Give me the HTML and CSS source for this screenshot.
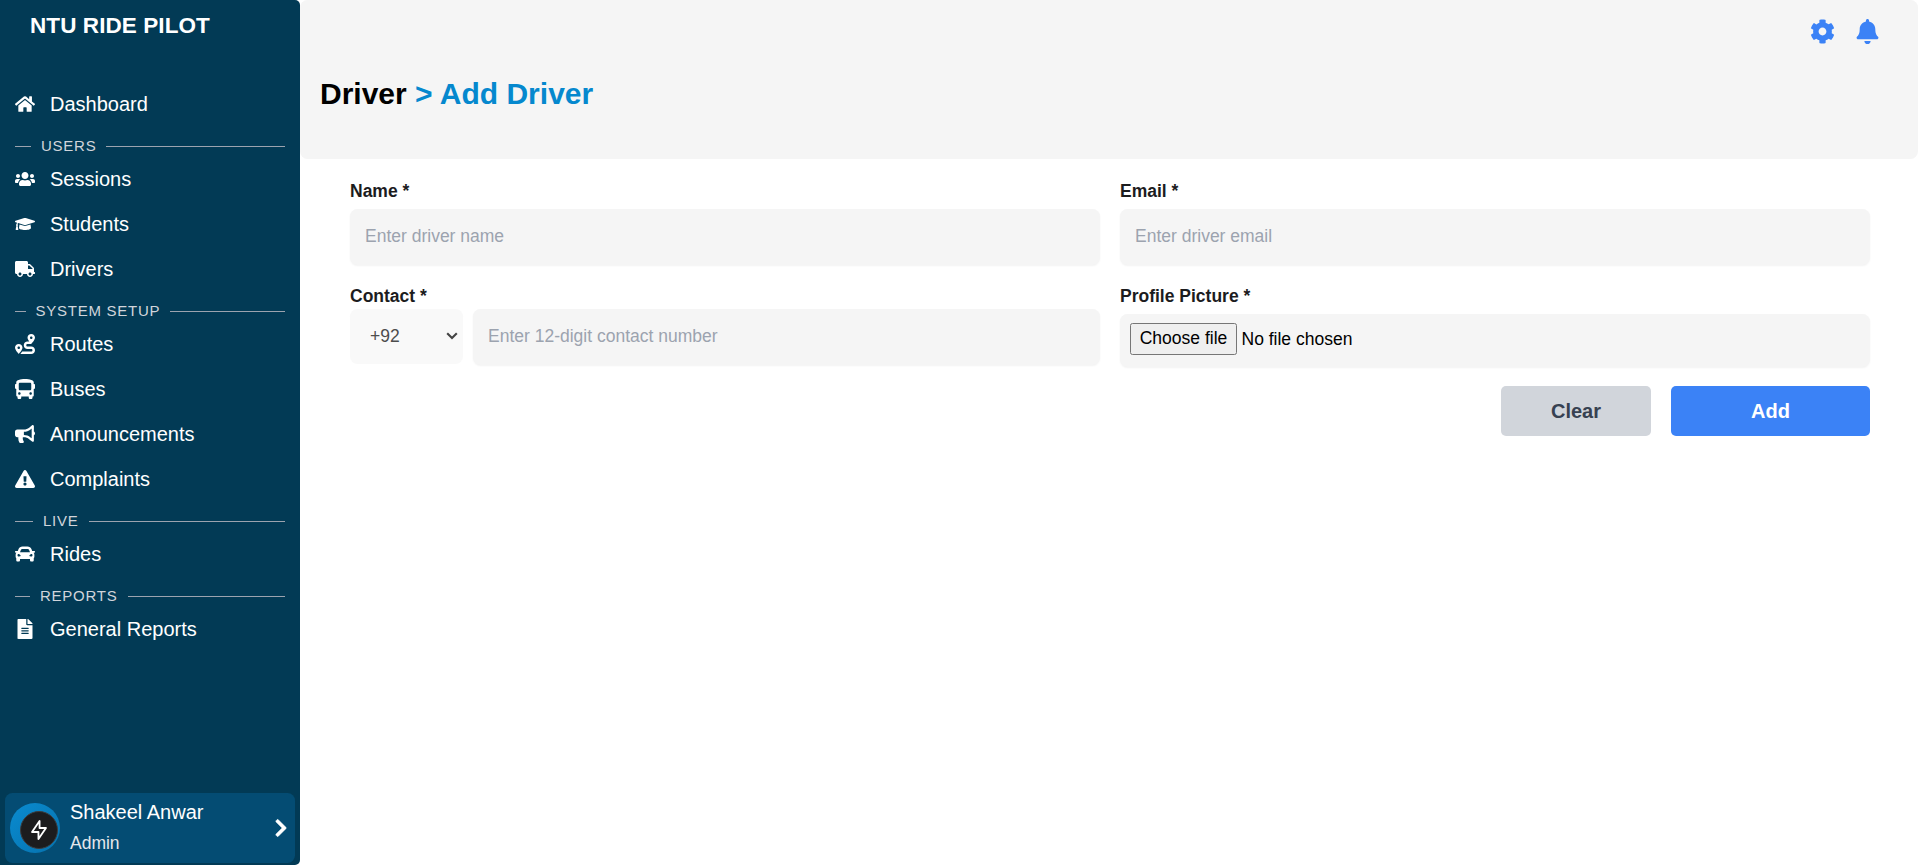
FILE: index.html
```html
<!DOCTYPE html>
<html lang="en">
<head>
<meta charset="utf-8">
<title>NTU Ride Pilot</title>
<link rel="stylesheet" href="styles.css">
</head>
<body>
<div class="app">
  <aside class="sidebar">
    <h1 class="brand">NTU RIDE PILOT</h1>
    <nav class="nav">
      <a class="nav-item"><svg class="icon" viewBox="0 0 576 512"><path d="M280.37 148.26L96 300.11V464a16 16 0 0 0 16 16l112.06-.29a16 16 0 0 0 15.92-16V368a16 16 0 0 1 16-16h64a16 16 0 0 1 16 16v95.64a16 16 0 0 0 16 16.05L464 480a16 16 0 0 0 16-16V300L295.67 148.26a12.19 12.19 0 0 0-15.3 0zM571.6 251.47L488 182.56V44.05a12 12 0 0 0-12-12h-56a12 12 0 0 0-12 12v72.61L318.47 43a48 48 0 0 0-61 0L4.34 251.47a12 12 0 0 0-1.6 16.9l25.5 31A12 12 0 0 0 45.15 301l235.22-193.74a12.19 12.19 0 0 1 15.3 0L530.9 301a12 12 0 0 0 16.9-1.6l25.5-31a12 12 0 0 0-1.7-16.93z"/></svg><span>Dashboard</span></a>
      <div class="section users"><span>USERS</span></div>
      <a class="nav-item"><svg class="icon" viewBox="0 0 640 512"><path d="M96 224c35.3 0 64-28.7 64-64s-28.7-64-64-64-64 28.7-64 64 28.7 64 64 64zm448 0c35.3 0 64-28.7 64-64s-28.7-64-64-64-64 28.7-64 64 28.7 64 64 64zm32 32h-64c-17.6 0-33.5 7.1-45.1 18.6 40.3 22.1 68.9 62 75.1 109.4h66c17.7 0 32-14.3 32-32v-32c0-35.3-28.7-64-64-64zm-256 0c61.9 0 112-50.1 112-112S381.9 32 320 32 208 82.1 208 144s50.1 112 112 112zm76.8 32h-8.3c-20.8 10-43.9 16-68.5 16s-47.6-6-68.5-16h-8.3C179.6 288 128 339.6 128 403.2V432c0 26.5 21.5 48 48 48h288c26.5 0 48-21.5 48-48v-28.8c0-63.6-51.6-115.2-115.2-115.2zm-223.7-13.4C161.5 263.1 145.6 256 128 256H64c-35.3 0-64 28.7-64 64v32c0 17.7 14.3 32 32 32h65.9c6.3-47.4 34.9-87.3 75.2-109.4z"/></svg><span>Sessions</span></a>
      <a class="nav-item"><svg class="icon" viewBox="0 0 640 512"><path d="M622.34 153.2L343.4 67.5c-15.2-4.67-31.6-4.67-46.79 0L17.66 153.2c-23.54 7.23-23.54 38.36 0 45.59l48.63 14.94c-10.67 13.19-17.23 29.28-17.88 46.9C38.78 266.15 32 276.11 32 288c0 10.78 5.68 19.85 13.86 25.65L20.33 428.53C18.11 438.52 25.71 448 35.94 448h56.11c10.24 0 17.84-9.48 15.62-19.47L82.14 313.65C90.32 307.85 96 298.78 96 288c0-11.57-6.47-21.25-15.66-26.87.76-15.02 8.44-28.3 20.69-36.72L296.6 284.5c9.06 2.78 26.44 6.25 46.79 0l278.95-85.7c23.55-7.24 23.55-38.36 0-45.6zM352.79 315.09c-28.53 8.76-52.84 3.92-65.59 0l-145.02-44.55L128 384c0 35.35 85.96 64 192 64s192-28.65 192-64l-14.18-113.47-145.03 44.56z"/></svg><span>Students</span></a>
      <a class="nav-item"><svg class="icon" viewBox="0 0 640 512"><path d="M624 352h-16V243.9c0-12.7-5.1-24.9-14.1-33.9L494 110.1c-9-9-21.2-14.1-33.9-14.1H416V48c0-26.5-21.5-48-48-48H48C21.5 0 0 21.5 0 48v320c0 26.5 21.5 48 48 48h16c0 53 43 96 96 96s96-43 96-96h128c0 53 43 96 96 96s96-43 96-96h48c8.8 0 16-7.2 16-16v-32c0-8.8-7.2-16-16-16zM160 464c-26.5 0-48-21.5-48-48s21.5-48 48-48 48 21.5 48 48-21.5 48-48 48zm320 0c-26.5 0-48-21.5-48-48s21.5-48 48-48 48 21.5 48 48-21.5 48-48 48zm80-208H416V144h44.1l99.9 99.9V256z"/></svg><span>Drivers</span></a>
      <div class="section system"><span>SYSTEM SETUP</span></div>
      <a class="nav-item"><svg class="icon" viewBox="0 0 512 512"><path d="M416 320h-96c-17.6 0-32-14.4-32-32s14.4-32 32-32h96s96-107 96-160-43-96-96-96-96 43-96 96c0 25.5 22.2 63.4 45.3 96H320c-52.9 0-96 43.1-96 96s43.1 96 96 96h96c17.6 0 32 14.4 32 32s-14.4 32-32 32H185.5c-16 24.8-33.8 47.7-47.3 64H416c52.9 0 96-43.1 96-96s-43.1-96-96-96zm0-256c17.7 0 32 14.3 32 32s-14.3 32-32 32-32-14.3-32-32 14.3-32 32-32zM96 256c-53 0-96 43-96 96s96 160 96 160 96-107 96-160-43-96-96-96zm0 128c-17.7 0-32-14.3-32-32s14.3-32 32-32 32 14.3 32 32-14.3 32-32 32z"/></svg><span>Routes</span></a>
      <a class="nav-item"><svg class="icon" viewBox="0 0 512 512"><path d="M488 128h-8V80c0-44.8-99.2-80-224-80S32 35.2 32 80v48h-8c-13.25 0-24 10.74-24 24v80c0 13.25 10.75 24 24 24h8v160c0 17.67 14.33 32 32 32v32c0 17.67 14.33 32 32 32h32c17.67 0 32-14.33 32-32v-32h192v32c0 17.67 14.33 32 32 32h32c17.67 0 32-14.33 32-32v-32h6.4c16 0 25.6-12.8 25.6-25.6V256h8c13.25 0 24-10.75 24-24v-80c0-13.26-10.75-24-24-24zM112 400c-17.67 0-32-14.33-32-32s14.33-32 32-32 32 14.33 32 32-14.33 32-32 32zm16-112c-17.67 0-32-14.33-32-32V128c0-17.67 14.33-32 32-32h256c17.67 0 32 14.33 32 32v128c0 17.67-14.33 32-32 32H128zm272 112c-17.67 0-32-14.33-32-32s14.33-32 32-32 32 14.33 32 32-14.33 32-32 32z"/></svg><span>Buses</span></a>
      <a class="nav-item"><svg class="icon" viewBox="0 0 576 512"><path d="M576 240c0-23.63-12.95-44.04-32-55.12V32.01C544 23.26 537.02 0 512 0c-7.12 0-14.19 2.38-19.98 7.02l-85.03 68.03C364.28 109.19 310.66 128 256 128H64c-35.35 0-64 28.65-64 64v96c0 35.35 28.65 64 64 64h33.7c-1.39 10.48-2.18 21.14-2.18 32 0 39.77 9.26 77.35 25.56 110.94 5.19 10.69 16.52 17.06 28.4 17.06h74.28c26.05 0 41.69-29.84 25.9-50.56-16.4-21.52-26.15-48.36-26.15-77.44 0-11.11 1.62-21.79 4.41-32H256c54.66 0 108.28 18.81 150.98 52.95l85.03 68.03a32.023 32.023 0 0 0 19.98 7.02c24.92 0 32-22.78 32-32V295.13C563.05 284.04 576 263.63 576 240zm-96 141.42l-33.05-26.44C392.95 311.78 325.12 288 256 288v-96c69.12 0 136.95-23.78 190.95-66.98L480 98.58v282.84z"/></svg><span>Announcements</span></a>
      <a class="nav-item"><svg class="icon" viewBox="0 0 576 512"><path d="M569.517 440.013C587.975 472.007 564.806 512 527.94 512H48.054c-36.937 0-59.999-40.055-41.577-71.987L246.423 23.985c18.467-32.009 64.72-31.951 83.154 0l239.94 416.028zM288 354c-25.405 0-46 20.595-46 46s20.595 46 46 46 46-20.595 46-46-20.595-46-46-46zm-43.673-165.346l7.418 136c.347 6.364 5.609 11.346 11.982 11.346h48.546c6.373 0 11.635-4.982 11.982-11.346l7.418-136c.375-6.874-5.098-12.654-11.982-12.654h-63.383c-6.884 0-12.356 5.78-11.981 12.654z"/></svg><span>Complaints</span></a>
      <div class="section live"><span>LIVE</span></div>
      <a class="nav-item"><svg class="icon" viewBox="0 0 512 512"><path d="M499.99 176h-59.87l-16.64-41.6C406.38 91.63 365.57 64 319.5 64h-127c-46.06 0-86.88 27.63-103.99 70.4L71.87 176H12.01C4.2 176-1.53 183.34.37 190.91l6 24C7.7 220.25 12.5 224 18.01 224h20.07C24.65 235.73 16 252.78 16 272v48c0 16.12 6.16 30.67 16 41.93V416c0 17.67 14.33 32 32 32h32c17.67 0 32-14.33 32-32v-32h256v32c0 17.67 14.33 32 32 32h32c17.67 0 32-14.33 32-32v-54.07c9.84-11.25 16-25.8 16-41.93v-48c0-19.22-8.65-36.27-22.07-48H494c5.51 0 10.31-3.75 11.64-9.09l6-24c1.89-7.57-3.84-14.91-11.65-14.91zm-352.06-17.83c7.29-18.22 24.94-30.17 44.57-30.17h127c19.63 0 37.28 11.95 44.57 30.17L384 208H128l19.93-49.83zM96 319.8c-19.2 0-32-12.76-32-31.9S76.8 256 96 256s48 28.71 48 47.85-28.8 15.95-48 15.95zm320 0c-19.2 0-48 3.19-48-15.95S396.8 256 416 256s32 12.76 32 31.9-12.8 31.9-32 31.9z"/></svg><span>Rides</span></a>
      <div class="section reports"><span>REPORTS</span></div>
      <a class="nav-item"><svg class="icon" viewBox="0 0 384 512"><path d="M224 136V0H24C10.7 0 0 10.7 0 24v464c0 13.3 10.7 24 24 24h336c13.3 0 24-10.7 24-24V160H248c-13.2 0-24-10.8-24-24zm64 236c0 6.6-5.4 12-12 12H108c-6.6 0-12-5.4-12-12v-8c0-6.6 5.4-12 12-12h168c6.6 0 12 5.4 12 12v8zm0-64c0 6.6-5.4 12-12 12H108c-6.6 0-12-5.4-12-12v-8c0-6.6 5.4-12 12-12h168c6.6 0 12 5.4 12 12v8zm0-72v8c0 6.6-5.4 12-12 12H108c-6.6 0-12-5.4-12-12v-8c0-6.6 5.4-12 12-12h168c6.6 0 12 5.4 12 12zm96-114.1v6.1H256V0h6.1c6.4 0 12.5 2.5 17 7l97.9 98c4.5 4.5 7 10.6 7 16.9z"/></svg><span>General Reports</span></a>
    </nav>
    <div class="profile">
      <div class="avatar"><div class="avatar-core"><svg class="bolt" viewBox="0 0 24 24"><path d="M12.6 2.2v7.6h7L11.4 21.8v-7.6h-7z"/></svg></div></div>
      <div class="who"><span class="who-name">Shakeel Anwar</span><span class="who-role">Admin</span></div>
      <svg class="chevron" viewBox="0 0 320 512"><path d="M285.476 272.971L91.132 467.314c-9.373 9.373-24.569 9.373-33.941 0l-22.667-22.667c-9.357-9.357-9.375-24.522-.04-33.901L188.505 256 34.484 101.255c-9.335-9.379-9.317-24.544.04-33.901l22.667-22.667c9.373-9.373 24.569-9.373 33.941 0L285.475 239.03c9.373 9.372 9.373 24.568.001 33.941z"/></svg>
    </div>
  </aside>
  <main class="main">
    <header class="header">
      <div class="actions">
        <svg class="action" viewBox="0 0 512 512"><path d="M487.4 315.7l-42.6-24.6c4.3-23.2 4.3-47 0-70.2l42.6-24.6c4.9-2.8 7.1-8.6 5.5-14-11.1-35.6-30-67.8-54.7-94.6-3.8-4.1-10-5.1-14.8-2.3L380.8 110c-17.9-15.4-38.5-27.3-60.8-35.1V25.8c0-5.6-3.9-10.5-9.4-11.7-36.7-8.2-74.3-7.8-109.2 0-5.5 1.2-9.4 6.1-9.4 11.7V75c-22.2 7.9-42.8 19.8-60.8 35.1L88.7 85.5c-4.9-2.8-11-1.9-14.8 2.3-24.7 26.7-43.6 58.9-54.7 94.6-1.7 5.4.6 11.2 5.5 14L67.3 221c-4.3 23.2-4.3 47 0 70.2l-42.6 24.6c-4.9 2.8-7.1 8.6-5.5 14 11.1 35.6 30 67.8 54.7 94.6 3.8 4.1 10 5.1 14.8 2.3l42.6-24.6c17.9 15.4 38.5 27.3 60.8 35.1v49.2c0 5.6 3.9 10.5 9.4 11.7 36.7 8.2 74.3 7.8 109.2 0 5.5-1.2 9.4-6.1 9.4-11.7v-49.2c22.2-7.9 42.8-19.8 60.8-35.1l42.6 24.6c4.9 2.8 11 1.9 14.8-2.3 24.7-26.7 43.6-58.9 54.7-94.6 1.5-5.5-.7-11.3-5.6-14.1zM256 336c-44.1 0-80-35.9-80-80s35.9-80 80-80 80 35.9 80 80-35.9 80-80 80z"/></svg>
        <svg class="action" viewBox="0 0 448 512"><path d="M224 512c35.32 0 63.97-28.65 63.97-64H160.03c0 35.35 28.65 64 63.97 64zm215.39-149.71c-19.32-20.76-55.47-51.99-55.47-154.29 0-77.7-54.48-139.9-127.94-155.16V32c0-17.67-14.32-32-31.98-32s-31.98 14.33-31.98 32v20.84C118.56 68.1 64.08 130.3 64.08 208c0 102.3-36.15 133.53-55.47 154.29-6 6.45-8.66 14.16-8.61 21.71.11 16.4 12.98 32 32.1 32h383.8c19.12 0 32-15.6 32.1-32 .05-7.55-2.61-15.27-8.61-21.71z"/></svg>
      </div>
      <h2 class="title">Driver <span class="crumb">&gt; Add Driver</span></h2>
    </header>
    <form class="form">
      <div class="field"><label class="label">Name *</label><input class="input" type="text" placeholder="Enter driver name"></div>
      <div class="field"><label class="label">Email *</label><input class="input" type="email" placeholder="Enter driver email"></div>
      <div class="field tight"><label class="label">Contact *</label>
        <div class="phone">
          <div class="code"><span>+92</span><svg class="caret" viewBox="0 0 12 8"><path d="M1.2 1.2L6 6l4.8-4.8"/></svg></div>
          <input class="input" type="text" placeholder="Enter 12-digit contact number">
        </div>
      </div>
      <div class="field"><label class="label">Profile Picture *</label>
        <div class="file"><button class="choose" type="button">Choose file</button><span>No file chosen</span></div>
      </div>
      <div class="buttons"><button class="btn clear" type="button">Clear</button><button class="btn add" type="button">Add</button></div>
    </form>
  </main>
</div>
</body>
</html>
```
FILE: styles.css
```css
* { box-sizing: border-box; }
body { margin: 0; background: #fff; color: #000; font-family: "Liberation Sans", Arial, sans-serif; }
h1, h2 { margin: 0; }
.app { display: flex; height: 865px; overflow: hidden; }

.sidebar { display: flex; flex-direction: column; flex: none; width: 300px; padding: 0 5px 2px; background: #023a55; border-radius: 0 5px 5px 0; color: #fff; }
.brand { padding: 8px 0 0 25px; font-size: 22.5px; line-height: 35px; letter-spacing: 0.08px; }
.nav { display: flex; flex-direction: column; margin-top: 38px; padding: 0 10px; }
.nav-item { display: flex; align-items: center; gap: 15px; height: 45px; font-size: 20px; line-height: 30px; }
.icon { flex: none; width: 20px; height: 20px; fill: #fff; }
.section { display: flex; align-items: center; gap: 10px; height: 20px; margin-top: 10px; color: #d1d5db; font-size: 15px; line-height: 20px; letter-spacing: 0.75px; white-space: nowrap; }
.section::before, .section::after { content: ""; height: 1px; background: #9ca3af; }
.section::before { flex: none; width: 16px; }
.section::after { flex: 1; }
.system::before { width: 10.5px; }
.live::before { width: 18px; }
.reports::before { width: 15px; }

.profile { display: flex; align-items: center; height: 70px; margin-top: auto; padding: 0 5px; background: #044c73; border-radius: 7.5px; }
.avatar { display: flex; flex: none; width: 50px; height: 50px; padding: 7.5px 0 0 10px; border-radius: 50%; background: linear-gradient(135deg, #0a8bd0, #0672ae); }
.avatar-core { display: flex; flex: none; align-items: center; justify-content: center; width: 38px; height: 38px; border-radius: 50%; background: #1c1c1e; border: 1px solid #3b3b3d; }
.bolt { width: 22px; height: 22px; fill: none; stroke: #fff; stroke-width: 2; stroke-linejoin: round; }
.who { display: flex; flex: 1; flex-direction: column; padding: 0 0 5px 10px; }
.who-name { font-size: 20px; line-height: 35px; }
.who-role { color: #e5e7eb; font-size: 17.5px; line-height: 26px; }
.chevron { width: 20px; height: 20px; margin-right: -1px; fill: #fff; stroke: #fff; stroke-width: 14; }

.main { flex: 1; min-width: 0; }
.header { height: 158.75px; padding: 18.75px 38px 0 20px; background: #f5f5f5; border-radius: 7.5px; }
.actions { display: flex; justify-content: flex-end; gap: 20px; height: 25px; }
.action { width: 25px; height: 25px; fill: #3b82f6; }
.title { margin-top: 30px; font-size: 30px; line-height: 40px; }
.crumb { color: #0588ce; }

.form { display: grid; grid-template-columns: 1fr 1fr; column-gap: 20px; padding: 20px 48px 0 50px; }
.field { display: flex; flex-direction: column; gap: 5px; height: 105px; }
.tight { gap: 0; }
.label { color: #1c1c1e; font-size: 17.5px; font-weight: 700; line-height: 25px; }
.input { width: 100%; height: 56px; padding: 0 15px 1px; border: 0; border-radius: 7.5px; background: #f5f5f5; box-shadow: 0 1px 2px rgba(0, 0, 0, 0.05); color: #111; font: 17.5px/25px "Liberation Sans", Arial, sans-serif; }
.input::placeholder { color: #9ca3af; opacity: 1; }
.phone { display: flex; gap: 10px; }
.code { display: flex; align-items: center; justify-content: space-between; flex: none; width: 113px; height: 55px; padding: 0 5px 0 20px; border-radius: 7.5px; background: #f9f9f9; color: #4d4d4d; font-size: 17.5px; }
.caret { width: 12px; height: 8px; fill: none; stroke: #444; stroke-width: 2.1; }
.file { display: flex; align-items: center; gap: 4.5px; height: 53px; padding: 0 10px 2px; border-radius: 7.5px; background: #f5f5f5; box-shadow: 0 1px 2px rgba(0, 0, 0, 0.05); font-size: 17.5px; line-height: 25px; }
.choose { width: 107px; height: 32px; padding: 0 0 2px; border: 1px solid #767676; border-radius: 2.5px; background: #efefef; color: #000; font: 17.5px/25px "Liberation Sans", Arial, sans-serif; }
.buttons { display: flex; grid-column: 1 / -1; justify-content: flex-end; gap: 20px; margin-top: -3px; }
.btn { width: 150px; height: 50px; padding: 0; border: 0; border-radius: 5px; font: 700 20px/30px "Liberation Sans", Arial, sans-serif; }
.clear { background: #d1d5db; color: #374151; }
.add { width: 199px; background: #3b82f6; color: #fff; }
```
